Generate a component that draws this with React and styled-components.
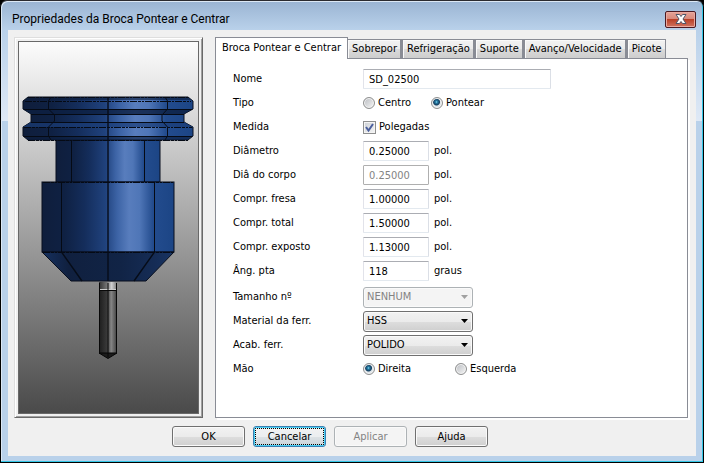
import React from "react";
import styled, { createGlobalStyle, css } from "styled-components";

const GlobalStyle = createGlobalStyle`
  *, *::before, *::after { box-sizing: border-box; }
  body {
    margin: 0;
    background: #000;
    color: #000;
    font: 11px/14px "DejaVu Sans Condensed", Tahoma, sans-serif;
  }
  button, input, select { font: inherit; color: inherit; margin: 0; }
`;

const Dialog = styled.form`
  display: flex;
  flex-direction: column;
  min-height: 100vh;
  padding: 1px 6px 6px;
  border: 1px solid #000;
  border-top-color: #2b2b30;
  border-radius: 7px 7px 0 0;
  box-shadow: inset -1px -1px 0 #33c6e6, inset 1px 1px 0 #dce8f5;
  background:
    linear-gradient(#9ab4d3, #b9d1ea) 0 0 / 100% 29px no-repeat,
    linear-gradient(#b9d1ea, #dfe9f6) 0 29px / 100% 91px no-repeat,
    #b9d1ea;
`;

const TitleBar = styled.header`
  display: flex;
  align-items: center;
  justify-content: space-between;
  height: 28px;
  padding: 6px 1px 0 5px;
`;

const Title = styled.h1`
  margin: 0;
  font-family: Roboto, "Segoe UI", sans-serif;
  font-size: 12px;
  line-height: 16px;
  font-weight: 400;
`;

const CloseButton = styled.button`
  display: flex;
  align-items: center;
  justify-content: center;
  width: 31px;
  height: 17px;
  padding: 0;
  border: 1px solid #4c1a22;
  border-radius: 2px;
  box-shadow: inset 0 0 0 1px #e9aaa0;
  background: linear-gradient(#e6a397 0, #d98a7c 45%, #bb4128 50%, #cf7360 100%);
`;

const Content = styled.main`
  flex: 1;
  display: flex;
  flex-direction: column;
  margin: 0 1px;
  padding: 7px 6px 9px;
  background: #f0f0f0;
`;

const Columns = styled.div`
  flex: 1;
  display: flex;
  gap: 12px;
`;

const Preview = styled.div`
  display: flex;
  width: 189px;
  flex: none;
  padding: 3px;
  border: 1px solid;
  border-color: #dedede #696969 #696969 #dedede;
  box-shadow: inset 1px 1px 0 #fff, inset -1px -1px 0 #a0a0a0;
`;

const Viewport = styled.div`
  flex: 1;
  display: flex;
  min-height: 0;
  border: 1px solid #686868;
  background: linear-gradient(#fcfcfc, #4a4a4a);

  svg { width: 100%; height: 100%; }
`;

const Tabbed = styled.section`
  flex: 1;
  display: flex;
  flex-direction: column;
  min-width: 0;
`;

const TabList = styled.div`
  display: flex;
  align-items: flex-end;
  height: 21px;
`;

const Tab = styled.button`
  height: 19px;
  padding: 0 3px 0 4px;
  border: 1px solid #898c95;
  border-left-width: ${(p) => (p.$first ? 0 : 2)}px;
  border-bottom: 0;
  box-shadow: inset 1px 1px 0 #fafafa;
  background: linear-gradient(#f2f2f2 0, #ebebeb 50%, #dadada 52%, #cdcdcd 100%);
  white-space: nowrap;
  ${(p) =>
    p.$active &&
    css`
      position: relative;
      height: 22px;
      margin-bottom: -1px;
      padding: 0 6px 2px;
      border-left-width: 1px;
      box-shadow: none;
      background: #fff;
    `}
`;

const Panel = styled.div`
  flex: 1;
  margin-right: 2px;
  padding: 8px 17px;
  border: 1px solid #898c95;
  box-shadow: 2px 2px 0 #fff;
  background: #fff;
`;

const Row = styled.div`
  display: grid;
  grid-template-columns: 130px minmax(0, 1fr);
  align-items: center;
  height: 24px;
`;

const RowGroup = styled.div`
  & + & { margin-top: 2px; }
`;

const Controls = styled.div`
  display: flex;
  align-items: center;
  gap: 5px;
`;

const TextBox = styled.input`
  width: ${(p) => (p.$wide ? 188 : 66)}px;
  height: 20px;
  padding: 0 5px;
  border: 1px solid;
  border-color: #abadb3 #dbdfe6 #e3e9ef #e2e3ea;
  border-radius: 1px;
  background: #fff;
  outline: 0;

  &:disabled {
    border-color: #afafaf;
    color: #838383;
  }
`;

const Option = styled.label`
  display: flex;
  align-items: center;
  gap: 3px;
  width: ${(p) => p.$width || "auto"};
`;

const Radio = styled.input`
  appearance: none;
  width: 12px;
  height: 12px;
  border: 1px solid #8e8f8f;
  border-radius: 50%;
  box-shadow: inset 0 0 0 1px #f4f4f4;
  background: linear-gradient(135deg, #b9bcc1, #f6f6f6);

  &:checked {
    background: radial-gradient(circle at 45% 40%, #9fe0f6 0, #2a86ae 1px, #123a5c 3px, #173f60 3px, #dfe5e9 4px);
  }
`;

const CheckFrame = styled.span`
  display: grid;
  width: 13px;
  height: 13px;

  > * { grid-area: 1 / 1; }
  svg { pointer-events: none; }
`;

const CheckBox = styled.input`
  appearance: none;
  width: 13px;
  height: 13px;
  border: 1px solid #8e8f8f;
  box-shadow: inset 0 0 0 1px #f4f4f4;
  background: linear-gradient(135deg, #cbcfd5, #f6f6f6);
`;

const SelectFrame = styled.span`
  display: grid;
  width: 110px;
  align-items: center;
  color: ${(p) => (p.$disabled ? "#838383" : "#000")};

  > * { grid-area: 1 / 1; }
  svg {
    justify-self: end;
    margin-right: 5px;
    pointer-events: none;
    fill: ${(p) => (p.$disabled ? "#a0a0a0" : "#000")};
  }
`;

const Select = styled.select`
  appearance: none;
  height: 21px;
  padding: 0 16px 0 3px;
  border: 1px solid #707070;
  border-radius: 3px;
  box-shadow: inset 0 0 0 1px #fafafa;
  background: linear-gradient(#f2f2f2 0, #ebebeb 50%, #dddddd 52%, #cfcfcf 100%);

  &:disabled {
    border-color: #adb2b5;
    background: #f4f4f4;
    opacity: 1;
  }
`;

const Footer = styled.footer`
  display: flex;
  gap: 8px;
  padding: 8px 0 0 158px;
`;

const Button = styled.button`
  width: 73px;
  height: 21px;
  padding: 0;
  border: 1px solid #707070;
  border-radius: 3px;
  box-shadow: inset 0 0 0 1px #fafafa;
  background: linear-gradient(#f2f2f2 0, #ebebeb 50%, #dddddd 52%, #cfcfcf 100%);

  &:disabled {
    border-color: #adb2b5;
    color: #838383;
    background: #f4f4f4;
  }
  ${(p) =>
    p.$focused &&
    css`
      border-color: #3c7fb1;
      box-shadow: inset 0 0 0 1px #48d0f5;
      background: linear-gradient(#f2f2f2 0, #ebeef0 50%, #dde2e5 52%, #cbd4da 100%);
      outline: 1px dotted #000;
      outline-offset: -3px;
    `}
`;

function ToolDrawing() {
  const flange =
    "M28 97H188L193 101V109L184 114V122L193 127V136L188 140H28L23 136V127L31 122V114L23 109V101Z";
  return (
    <svg viewBox="19 42 179 371" role="img" aria-label="Broca com suporte">
      <defs>
        <linearGradient id="holder">
          <stop offset="0" stopColor="#0f1e3c" />
          <stop offset="0.17" stopColor="#0f2143" />
          <stop offset="0.32" stopColor="#142d5b" />
          <stop offset="0.48" stopColor="#20427d" />
          <stop offset="0.57" stopColor="#3c63a5" />
          <stop offset="0.66" stopColor="#587dbd" />
          <stop offset="0.74" stopColor="#4f76b7" />
          <stop offset="0.84" stopColor="#234c8e" />
          <stop offset="1" stopColor="#1c4585" />
        </linearGradient>
        <linearGradient id="cone">
          <stop offset="0" stopColor="#15305f" />
          <stop offset="0.2" stopColor="#10203f" />
          <stop offset="0.6" stopColor="#112446" />
          <stop offset="0.85" stopColor="#152c55" />
          <stop offset="1" stopColor="#183463" />
        </linearGradient>
        <linearGradient id="bit">
          <stop offset="0" stopColor="#1d1d1d" />
          <stop offset="0.45" stopColor="#3a3a3a" />
          <stop offset="0.68" stopColor="#858585" />
          <stop offset="0.9" stopColor="#555" />
          <stop offset="1" stopColor="#333" />
        </linearGradient>
        <linearGradient id="collar">
          <stop offset="0" stopColor="#333" />
          <stop offset="0.45" stopColor="#777" />
          <stop offset="0.7" stopColor="#d0d0d0" />
          <stop offset="1" stopColor="#777" />
        </linearGradient>
      </defs>

      <g stroke="#080f1e" strokeWidth="1">
        <rect x="56" y="140" width="104" height="42" fill="url(#holder)" />
        <rect x="42" y="182" width="132" height="70" fill="url(#holder)" />
        <path d="M42 252H174L146 281H71Z" fill="url(#cone)" />
        <path d={flange} fill="url(#holder)" />
      </g>

      <path d="M28 97H188L191 100H25Z M25 137H191L188 140H28Z" fill="#0c1c3b" fillOpacity="0.6" />
      <path d="M23 109H193L184 114H31Z" fill="#0d1f41" fillOpacity="0.8" />
      <path d="M31 122H184L193 127H23Z" fill="#1b3d78" fillOpacity="0.7" />

      <g fill="none" stroke="#050a14" shapeRendering="crispEdges">
        <path d="M24 109.5H192M31 114.5H184M24 136.5H192M31 122.5H184" />
        <path d="M25 101.5H191M24 127.5H192M28 97.5H188M28 140.5H188M43 182.5H173M43 252.5H173" strokeDasharray="7 1 3 1 2 1" />
        <path d="M71.5 140V182M144.5 140V182M61.5 182V252M154.5 182V252" />
      </g>
      <g fill="none" stroke="#060c18">
        <path d="M51 97L48.5 101V109L54.5 115V121L48.5 127V136L51 140" />
        <path d="M165 97L167.5 101V109L162 115V121L167.5 127V136L165 140" />
        <path d="M61.5 252L82 281M154.5 252L134 281" strokeWidth="1.4" />
        <path d="M108 97V281" strokeWidth="2" strokeOpacity="0.7" />
      </g>

      <rect x="99" y="282" width="18" height="7" fill="url(#collar)" />
      <rect x="99" y="289" width="18" height="1" fill="#ccc" />
      <rect x="99" y="290" width="18" height="64" fill="url(#bit)" />
      <path d="M99 353H117L108 358.500Z" fill="#1b1b1b" stroke="#050505" />
      <path d="M99.500 283V353M116.500 283V353M108 283V357M99 290.500H117" stroke="#080808" fill="none" />
    </svg>
  );
}

function Field({ id, label, value, unit, wide, disabled }) {
  return (
    <Row>
      <label htmlFor={id}>{label}</label>
      <Controls>
        <TextBox id={id} defaultValue={value} $wide={wide} disabled={disabled} />
        {unit && <span>{unit}</span>}
      </Controls>
    </Row>
  );
}

function SelectField({ id, label, value, disabled }) {
  return (
    <Row>
      <label htmlFor={id}>{label}</label>
      <SelectFrame $disabled={disabled}>
        <Select id={id} disabled={disabled} defaultValue={value}>
          <option>{value}</option>
        </Select>
        <svg width="7" height="4" viewBox="0 0 7 4" aria-hidden="true">
          <path d="M0 0H7L3.500 4Z" />
        </svg>
      </SelectFrame>
    </Row>
  );
}

function RadioField({ name, label, options, selected, width }) {
  return (
    <Row role="radiogroup" aria-labelledby={`${name}-label`}>
      <span id={`${name}-label`}>{label}</span>
      <Controls>
        {options.map((option, i) => (
          <Option key={option} $width={i === 0 ? width : undefined}>
            <Radio type="radio" name={name} defaultChecked={option === selected} />
            {option}
          </Option>
        ))}
      </Controls>
    </Row>
  );
}

const tabs = ["Broca Pontear e Centrar", "Sobrepor", "Refrigeração", "Suporte", "Avanço/Velocidade", "Picote"];

const dimensions = [
  { id: "diametro", label: "Diâmetro", value: "0.25000", unit: "pol." },
  { id: "corpo", label: "Diâ do corpo", value: "0.25000", unit: "pol.", disabled: true },
  { id: "fresa", label: "Compr. fresa", value: "1.00000", unit: "pol." },
  { id: "total", label: "Compr. total", value: "1.50000", unit: "pol." },
  { id: "exposto", label: "Compr. exposto", value: "1.13000", unit: "pol." },
  { id: "angulo", label: "Âng. pta", value: "118", unit: "graus" },
];

export default function App() {
  return (
    <>
      <GlobalStyle />
      <Dialog onSubmit={(e) => e.preventDefault()}>
        <TitleBar>
          <Title>Propriedades da Broca Pontear e Centrar</Title>
          <CloseButton type="button" aria-label="Fechar">
            <svg width="12" height="10" viewBox="0 0 12 10" aria-hidden="true">
              <path
                d="M1 .5H4.500L6 2.500L7.500 .5H11L8 5L11 9.500H7.500L6 7.500L4.500 9.500H1L4 5Z"
                fill="#fff"
                stroke="#4f5568"
              />
            </svg>
          </CloseButton>
        </TitleBar>
        <Content>
          <Columns>
            <Preview>
              <Viewport>
                <ToolDrawing />
              </Viewport>
            </Preview>
            <Tabbed>
              <TabList role="tablist">
                {tabs.map((tab, i) => (
                  <Tab key={tab} type="button" role="tab" aria-selected={i === 0} $active={i === 0} $first={i === 1}>
                    {tab}
                  </Tab>
                ))}
              </TabList>
              <Panel role="tabpanel">
                <RowGroup>
                  <Field id="nome" label="Nome" value="SD_02500" wide />
                  <RadioField name="tipo" label="Tipo" options={["Centro", "Pontear"]} selected="Pontear" width="63px" />
                  <Row>
                    <span>Medida</span>
                    <Option>
                      <CheckFrame>
                        <CheckBox type="checkbox" defaultChecked />
                        <svg width="13" height="13" viewBox="0 0 13 13" aria-hidden="true">
                          <path d="M3 6L5.500 9.500L10 3" fill="none" stroke="#4b5f9d" strokeWidth="2" />
                        </svg>
                      </CheckFrame>
                      Polegadas
                    </Option>
                  </Row>
                  {dimensions.map((d) => (
                    <Field key={d.id} {...d} />
                  ))}
                </RowGroup>
                <RowGroup>
                  <SelectField id="tamanho" label="Tamanho nº" value="NENHUM" disabled />
                  <SelectField id="material" label="Material da ferr." value="HSS" />
                  <SelectField id="acabamento" label="Acab. ferr." value="POLIDO" />
                  <RadioField name="mao" label="Mão" options={["Direita", "Esquerda"]} selected="Direita" width="87px" />
                </RowGroup>
              </Panel>
            </Tabbed>
          </Columns>
          <Footer>
            <Button type="submit">OK</Button>
            <Button type="button" $focused>Cancelar</Button>
            <Button type="button" disabled>Aplicar</Button>
            <Button type="button">Ajuda</Button>
          </Footer>
        </Content>
      </Dialog>
    </>
  );
}
